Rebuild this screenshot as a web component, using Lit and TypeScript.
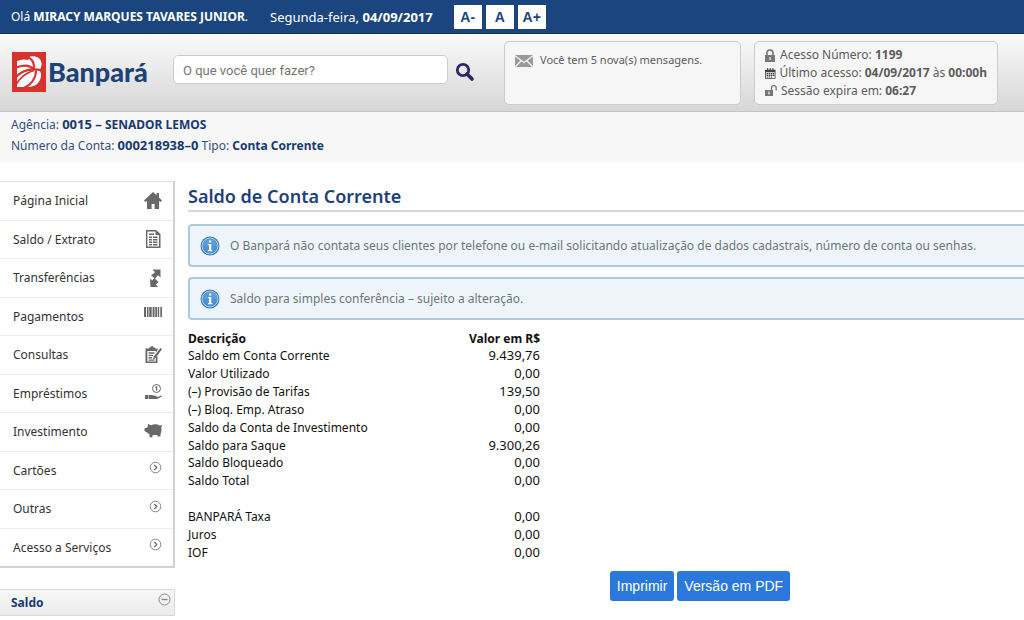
import { LitElement, html, css, svg, nothing } from "lit";
import { customElement } from "lit/decorators.js";

const glyphs: Record<string, unknown> = {
  home: svg`<path d="M9 0 0 8.500l1.400 1.600L3 9V17h4.600v-5h3v5H15V9l1.600 1.100L18 8.500 15 5.600V1h-2.400v2.300z"/>`,
  sheet: svg`<path fill-rule="evenodd" d="M2 0h10l4.500 4v14H2zM3.400 1.400v15.200H15V5h-3.500V1.400z"/><path d="M5 3.500h5V5H5zM5 6.500h3V8H5zM9 6.500h4.500V8H9zM5 9h3v1.500H5zM9 9h4.500v1.500H9zM5 11.500h3V13H5zM9 11.500h4.500V13H9zM5 14h3v1.500H5zM9 14h4.500v1.500H9z"/>`,
  transfer: svg`<path d="M8.500.500h8v8l-2.400-2.300-3 3.300L7 6.500l4-3.200zM6 9.500l2 2 2.500-2.500 4 4-2.800 2.500 2.800 2.800H6.500z"/>`,
  barcode: svg`<path d="M0 0h2v10H0zM3 0h1.500v10H3zM5.200 0h2.500v10H5.200zM8.600 0h2v10h-2zM11.300 0h2v10h-2zM14 0h1.200v10H14zM16.300 0H18v10h-1.700z"/>`,
  clipboard: svg`<path fill-rule="evenodd" d="M1.500 2.500h3.500V1.500H6.500a1.500 1.500 0 0 1 3 0H11v1h2.500v2L12 6.500V5H3.300v10.500h8.500v-3.500l1.700-2v7H1.500z"/><path d="m16.500 2 1.500 1-6.500 9.300-2.500 1.200.6-2.800zM4.500 6.300h6v1.400h-6zM4.500 8.700h4.500v1.400h-4.500zM4.500 11.100h3.500v1.400h-3.500zM4.500 13.400h6v1.400h-6z"/>`,
  loan: svg`<circle cx="12.500" cy="4.500" r="4" fill="none" stroke="currentColor"/><path d="M12 2.300h1.200v4.400H12zM11.200 2.800h1.300v1h-1.300z"/><path d="M1 11h3.500v4H1zM5 11h3c1.500 0 2.300 1 4.500.8.700.5.300 1.200-.6 1.200h1.800l3.500-1.500c1 0 .8 1-.2 1.500L13 15H5z"/>`,
  pig: svg`<path d="M4 1 7 2.200C9.500 1 13.500 1 15.500 2.500c1 .3 1.500-.3 1.800-.8l.7 1.300-.8 1.500c.6 3 .1 5-.7 6.500v2.500h-3V12H8.500v2.200h-3v-2.700L3 9.500.5 8V5.300L3.500 4.500z"/>`,
  chevron: svg`<g fill="none" stroke="currentColor"><circle cx="11.500" cy="6.500" r="5.300" stroke-width=".8"/><path d="m10.300 4 2.500 2.500-2.500 2.500" stroke-width="1.200"/></g>`,
};

const icon = (name: string) =>
  html`<svg class="icon" viewBox="0 0 18 18" width="18" height="18" fill="currentColor" aria-hidden="true">${glyphs[name]}</svg>`;

const lock = svg`<path fill-rule="evenodd" d="M0 6h10v7H0zM4.400 8v3h1.200V8z"/><path d="M2 6.500V4a3 3 0 0 1 6 0v2.500" fill="none" stroke="currentColor" stroke-width="1.600"/>`;
const calendar = svg`<path fill-rule="evenodd" d="M0 2h13v11H0zM1 5v7h11V5z"/><path d="M2.500 0H4v3H2.500zM9 0h1.500v3H9zM5.800 0h1.500v3H5.800zM2 6h2v1.400H2zM4.700 6h1.800v1.400H4.700zM7.200 6H9v1.400H7.200zM9.700 6h1.800v1.400H9.700zM2 8.200h2v1.400H2zM4.700 8.200h1.800v1.400H4.700zM7.200 8.200H9v1.400H7.200zM9.700 8.200h1.800v1.400H9.700zM2 10.200h2v1.300H2zM4.700 10.200h1.800v1.300H4.700zM7.200 10.200H9v1.300H7.200z"/>`;
const unlock = svg`<path fill-rule="evenodd" d="M0 5h8v6H0zM3.400 6.500v3h1.200v-3z"/><path d="M6.500 5V3a2.300 2.300 0 0 1 4.700 0v2.500" fill="none" stroke="currentColor" stroke-width="1.300"/>`;

const menu = [
  ["Página Inicial", "home"],
  ["Saldo / Extrato", "sheet"],
  ["Transferências", "transfer"],
  ["Pagamentos", "barcode"],
  ["Consultas", "clipboard"],
  ["Empréstimos", "loan"],
  ["Investimento", "pig"],
  ["Cartões", "chevron"],
  ["Outras", "chevron"],
  ["Acesso a Serviços", "chevron"],
];

const rows: [string, string][] = [
  ["Saldo em Conta Corrente", "9.439,76"],
  ["Valor Utilizado", "0,00"],
  ["(–) Provisão de Tarifas", "139,50"],
  ["(–) Bloq. Emp. Atraso", "0,00"],
  ["Saldo da Conta de Investimento", "0,00"],
  ["Saldo para Saque", "9.300,26"],
  ["Saldo Bloqueado", "0,00"],
  ["Saldo Total", "0,00"],
  ["", ""],
  ["BANPARÁ Taxa", "0,00"],
  ["Juros", "0,00"],
  ["IOF", "0,00"],
];

@customElement("info-notice")
class InfoNotice extends LitElement {
  static styles = css`
    :host { display: block; }
    .notice {
      display: flex; align-items: center; gap: 10px;
      min-height: 39px; padding: 0 10px;
      border: 2px solid #aecae2; border-right: 0;
      border-radius: 4px 0 0 4px; background: #edf5fb;
      color: #707678; font-size: 12px; white-space: nowrap;
    }
    .badge { flex: none; }
  `;
  render() {
    return html`<div class="notice" role="note">
      <svg class="badge" width="20" height="20" viewBox="0 0 20 20" aria-hidden="true">
        <circle cx="10" cy="10" r="9.500" fill="#3677b5"/>
        <circle cx="10" cy="10" r="8" fill="#4b93d4" stroke="#b5d5f0"/>
        <path d="M2.500 10a7.500 7.500 0 0 1 15 0z" fill="#68a7de" opacity=".5"/>
        <path d="M9 4.500h2.300v2H9zM8.200 8h3.100v6h1v1.300H8V14h1V9.300h-.8z" fill="#fff"/>
      </svg>
      <span><slot></slot></span>
    </div>`;
  }
}

@customElement("app-root")
class AppRoot extends LitElement {
  static styles = css`
    :host {
      display: block; min-height: 100vh; overflow: hidden; background: #fff;
      font-family: "Noto Sans", "Open Sans", sans-serif; font-size: 12px; color: #111;
    }
    .topbar {
      display: flex; align-items: center; box-sizing: border-box; height: 34px;
      padding: 0 11px; background: #1a457f; border-bottom: 1px solid #123260; color: #fff;
    }
    .today { margin-left: 22px; font-size: 13px; }
    .sizes { display: flex; gap: 4px; margin-left: 21px; }
    .size {
      width: 28px; height: 24px; padding: 0; border: 0; background: #fff;
      color: #1a457f; font: bold 14px "Liberation Sans", sans-serif;
    }
    .header {
      display: flex; align-items: flex-start; box-sizing: border-box; height: 78px;
      padding: 7px 26px 0 12px; border-bottom: 1px solid #c4c4c4;
      background: linear-gradient(#f9f9f9, #eee 35%, #d6d6d6);
    }
    .logo { display: flex; align-items: center; gap: 2px; width: 161px; height: 62px; text-decoration: none; }
    .brand { color: #1d4278; font: 900 27px/40px Lato, sans-serif; }
    .search { display: flex; align-items: center; gap: 7px; margin-top: 14px; }
    .query {
      box-sizing: border-box; width: 275px; height: 29px; padding: 0 9px;
      border: 1px solid #ccc; border-radius: 5px; background: #fff;
      color: #555; font: 14px "Liberation Sans", sans-serif;
    }
    .query::placeholder { color: #757575; opacity: 1; font: 13px Roboto, sans-serif; }
    .go { display: flex; width: 20px; padding: 4px 0 0; border: 0; background: none; }
    .card {
      box-sizing: border-box; height: 64px; border: 1px solid #ccc; border-radius: 5px;
      background: #f6f6f6; color: #5c5c5c; white-space: nowrap;
    }
    .messages { display: flex; gap: 7px; width: 237px; margin-left: auto; padding: 9px 10px; font-size: 11px; line-height: 17px; }
    .mail { margin-top: 4px; }
    .session {
      display: flex; flex-direction: column; width: 244px; margin: 0 0 0 13px; padding: 4px 10px; list-style: none;
      line-height: 18px;
    }
    .fact { display: flex; align-items: center; gap: 4px; }
    .account {
      display: flex; flex-direction: column; padding: 2px 11px 6px; background: #f7f7f7;
      color: #34507d; line-height: 21px;
    }
    .account strong { color: #173a70; }
    .account .digits { font-size: 13px; }
    .body { display: grid; grid-template-columns: 175px minmax(0, 1fr); column-gap: 13px; padding-top: 19px; }
    .menu {
      display: flex; flex-direction: column; min-height: 384px; margin: 0; padding: 0; list-style: none;
      border: 1px solid #ddd; border-left: 0; border-right: 2px solid #d2d2d2; border-bottom: 2px solid #d2d2d2;
    }
    .entry { display: flex; flex: 1; border-bottom: 1px solid #ececec; }
    .entry:last-child { border-bottom: 0; }
    .link {
      display: flex; flex: 1; align-items: center; justify-content: space-between;
      padding: 0 11px 0 13px; color: #333; text-decoration: none;
    }
    .icon { color: #686868; }
    .panel {
      display: flex; justify-content: space-between; align-items: center; height: 25px; margin: 21px 0 0; padding: 0 3px 0 11px;
      border: 1px solid #d9d9d9; border-left: 0; background: linear-gradient(#f7f7f7, #ebebeb);
      color: #173a70; font-size: 12px;
    }
    .fold { display: flex; padding: 0 0 6px; border: 0; background: none; color: #8a8a8a; }
    .main { margin-right: -188px; }
    .title {
      margin: 0 0 12px; padding: 3px 0 2px; border-bottom: 2px solid #d6d6d6;
      color: #1d3f7c; font-size: 18px; font-weight: 600; line-height: 24px;
    }
    .notices { display: grid; gap: 10px; }
    .balance { width: 352px; height: 231px; margin-top: 10px; border-collapse: collapse; line-height: 17px; color: #111; }
    .balance th, .balance td { padding: 0; text-align: left; }
    .balance .value { text-align: right; }
    .balance td.value { font-size: 13px; }
    .actions { display: flex; justify-content: center; gap: 3px; margin-top: 10px; }
    .action {
      height: 30px; padding: 0 7px; border: 0; border-radius: 3px; background: #2b78dc;
      color: #fff; font: 14px "Liberation Sans", sans-serif;
    }
  `;

  render() {
    return html`
      <div class="topbar">
        <span>Olá <strong>MIRACY MARQUES TAVARES JUNIOR</strong>.</span>
        <span class="today">Segunda-feira, <strong>04/09/2017</strong></span>
        <div class="sizes">
          <button class="size">A-</button><button class="size">A</button><button class="size">A+</button>
        </div>
      </div>
      <header class="header">
        <a class="logo" href="#">
          <svg width="34" height="40" viewBox="0 0 34 40" aria-hidden="true">
            <path fill="#d8322f" d="M0 0h34v40H0z"/>
            <path fill="#fff" d="M5 9C9 7.500 13 7 16 8l2-3.500C24 3.500 29 6 29.500 11c.3 3-.7 5.500-2 7.500 2 2.500 2 6 .5 9.500-2 4.500-6 7-13 7H5z"/>
            <g fill="none" stroke="#d8322f">
              <path d="M13 5c6.500.5 10 5.500 8.500 12" stroke-width="2.200"/>
              <path d="M3 16c8-3.500 15-3.500 19 2" stroke-width="2.200"/>
              <path d="M3 26c6-7 13.500-10 26-8" stroke-width="2.200"/>
              <path d="M3 34c4-7 9-13 19-15.500" stroke-width="1.800"/>
              <path d="M12 36c7-3 12-9.500 12-17.500" stroke-width="2"/>
            </g>
          </svg>
          <span class="brand">Banpará</span>
        </a>
        <form class="search" role="search">
          <input class="query" type="search" aria-label="O que você quer fazer?" placeholder="O que você quer fazer?">
          <button class="go" type="button" aria-label="Buscar">
            <svg width="20" height="20" viewBox="0 0 20 20" fill="none" stroke="#2b2864" aria-hidden="true">
              <circle cx="8" cy="8" r="5.700" stroke-width="2.800"/>
              <path d="m12 12 5 5" stroke-width="3.600" stroke-linecap="round"/>
            </svg>
          </button>
        </form>
        <div class="card messages">
          <svg class="mail" width="18" height="12" viewBox="0 0 18 12" aria-hidden="true">
            <path fill="#999" d="M0 0h18v12H0z"/>
            <path d="m0 .8 9 6.700L18 .8M.5 11.500 6 6m6 0 5.500 5.500" fill="none" stroke="#f6f6f6" stroke-width="1.300"/>
          </svg>
          <span>Você tem 5 nova(s) mensagens.</span>
        </div>
        <ul class="card session">
          <li class="fact"><svg width="11" height="13" viewBox="0 0 11 13" fill="currentColor" color="#777" aria-hidden="true">${lock}</svg><span>Acesso Número: <strong>1199</strong></span></li>
          <li class="fact"><svg width="13" height="13" viewBox="0 0 13 13" fill="#444" aria-hidden="true">${calendar}</svg><span>Último acesso: <strong>04/09/2017</strong> às <strong>00:00h</strong></span></li>
          <li class="fact"><svg width="12" height="12" viewBox="0 0 12 12" fill="currentColor" color="#777" aria-hidden="true">${unlock}</svg><span>Sessão expira em: <strong>06:27</strong></span></li>
        </ul>
      </header>
      <div class="account">
        <span>Agência: <strong><span class="digits">0015 –</span> SENADOR LEMOS</strong></span>
        <span>Número da Conta: <strong class="digits">000218938–0</strong> Tipo: <strong>Conta Corrente</strong></span>
      </div>
      <div class="body">
        <nav>
          <ul class="menu">
            ${menu.map(([label, name]) => html`<li class="entry"><a class="link" href="#"><span>${label}</span>${icon(name)}</a></li>`)}
          </ul>
          <h2 class="panel">Saldo
            <button class="fold" aria-label="Recolher">
              <svg width="13" height="13" viewBox="0 0 13 13" fill="none" stroke="currentColor" aria-hidden="true"><circle cx="6.500" cy="6.500" r="5.500"/><path d="M3.500 6.500h6" stroke-width="1.400"/></svg>
            </button>
          </h2>
        </nav>
        <main class="main">
          <h1 class="title">Saldo de Conta Corrente</h1>
          <div class="notices">
            <info-notice>O Banpará não contata seus clientes por telefone ou e-mail solicitando atualização de dados cadastrais, número de conta ou senhas.</info-notice>
            <info-notice>Saldo para simples conferência – sujeito a alteração.</info-notice>
          </div>
          <table class="balance">
            <thead><tr><th scope="col">Descrição</th><th scope="col" class="value">Valor em R$</th></tr></thead>
            <tbody>
              ${rows.map(([label, value]) => html`<tr><td>${label || html`&nbsp;`}</td><td class="value">${value || nothing}</td></tr>`)}
            </tbody>
          </table>
          <div class="actions">
            <button class="action">Imprimir</button>
            <button class="action">Versão em PDF</button>
          </div>
        </main>
      </div>
    `;
  }
}
